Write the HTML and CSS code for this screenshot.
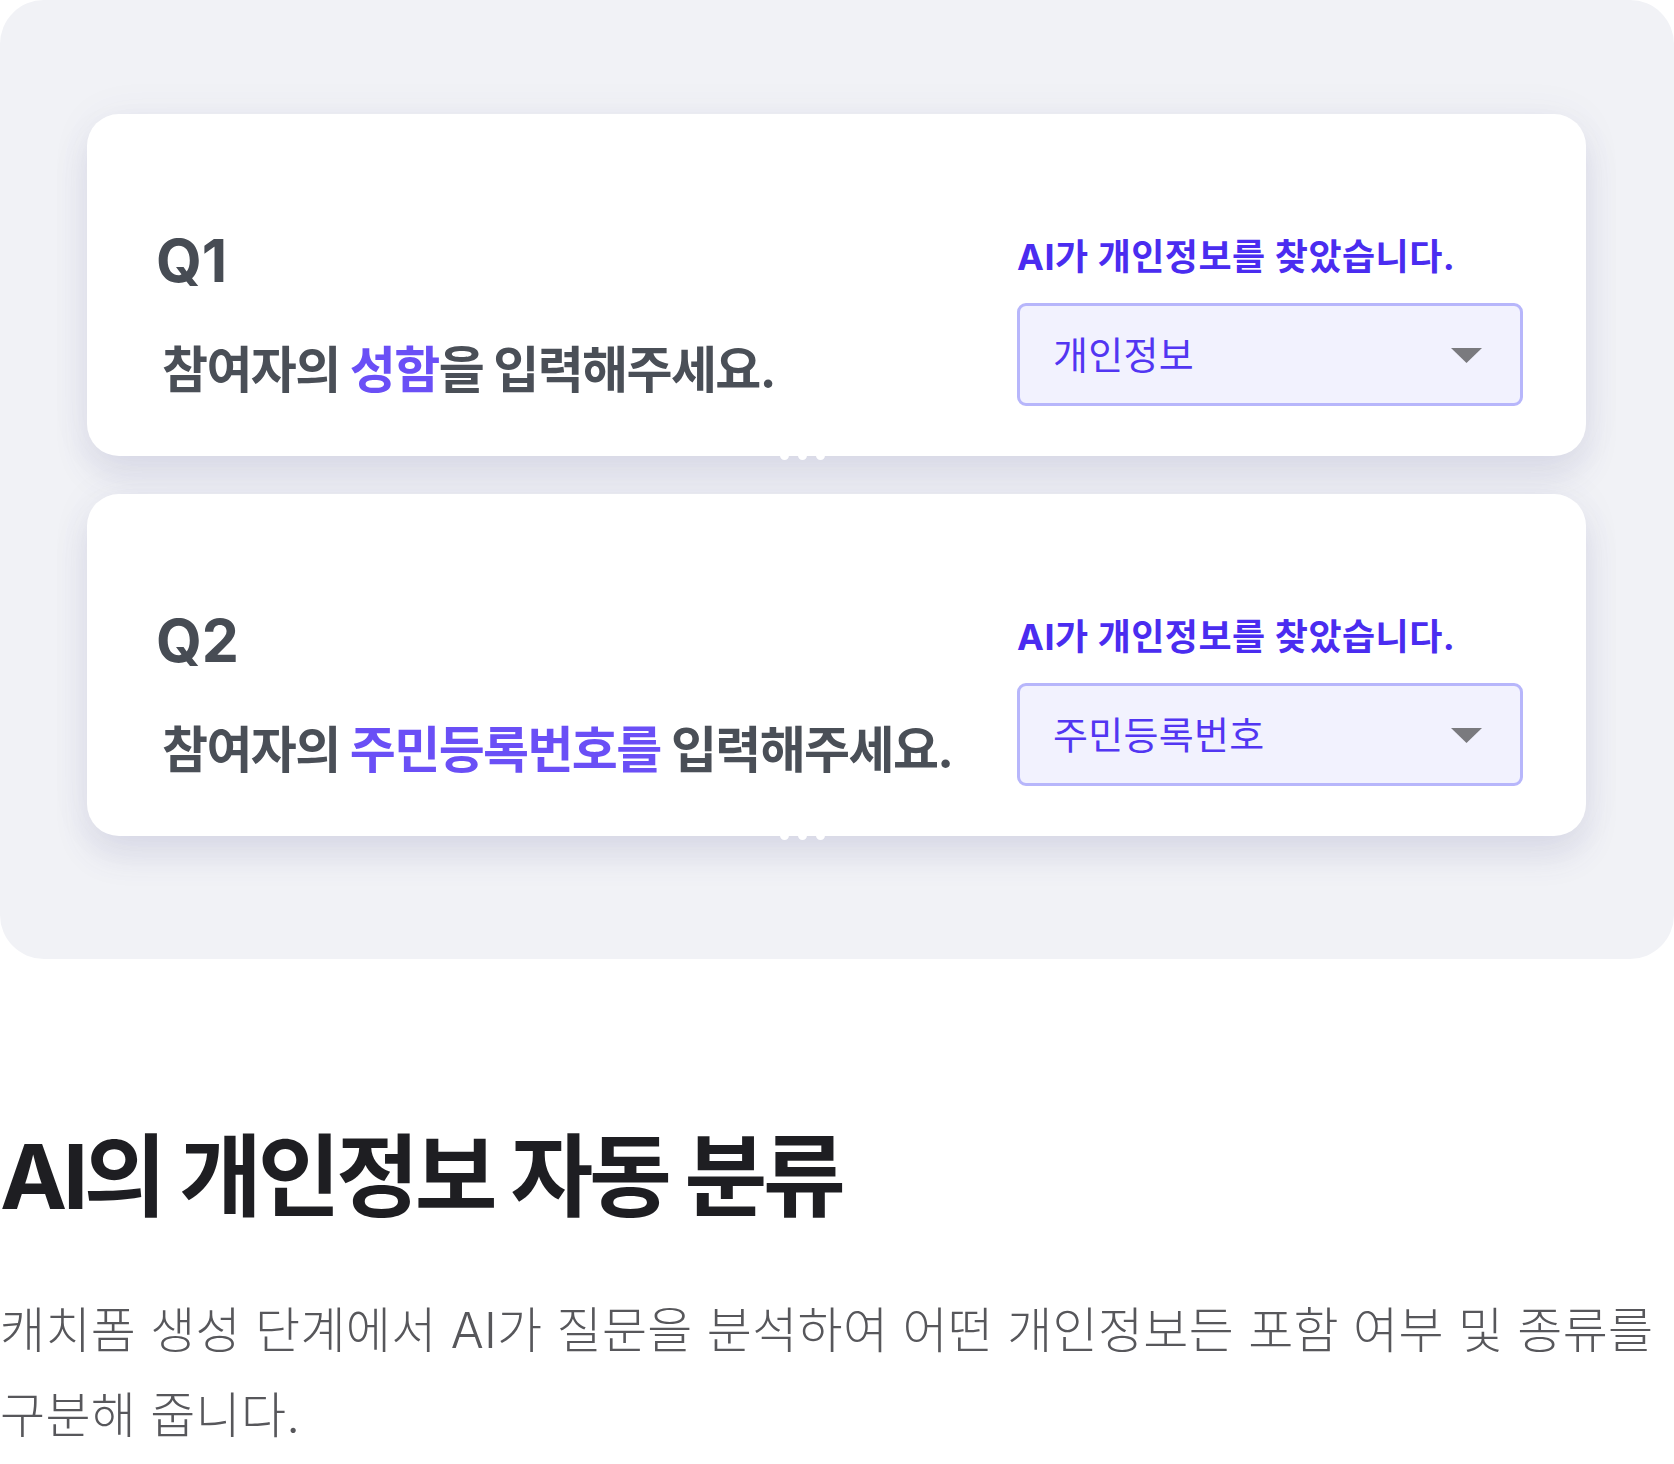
FILE: index.html
```html
<!DOCTYPE html>
<html lang="ko">
<head>
<meta charset="utf-8">
<title>AI의 개인정보 자동 분류</title>
<link rel="stylesheet" href="styles.css">
</head>
<body>
<div class="panel">
  <div class="card">
    <div class="question">
      <div class="qnum">Q1</div>
      <div class="qtext">참여자의 <span class="hl">성함</span>을 입력해주세요.</div>
    </div>
    <div class="ai">
      <div class="ai-label">AI가 개인정보를 찾았습니다.</div>
      <div class="select">
        <span class="select-value">개인정보</span>
        <svg class="caret" width="31" height="15" viewBox="0 0 31 15"><path d="M0 0H31L15.5 15Z" fill="#7a7a7e"/></svg>
      </div>
    </div>
    <div class="dots"><i></i><i></i><i></i></div>
  </div>
  <div class="card">
    <div class="question">
      <div class="qnum">Q2</div>
      <div class="qtext">참여자의 <span class="hl">주민등록번호를</span> 입력해주세요.</div>
    </div>
    <div class="ai">
      <div class="ai-label">AI가 개인정보를 찾았습니다.</div>
      <div class="select">
        <span class="select-value">주민등록번호</span>
        <svg class="caret" width="31" height="15" viewBox="0 0 31 15"><path d="M0 0H31L15.5 15Z" fill="#7a7a7e"/></svg>
      </div>
    </div>
    <div class="dots"><i></i><i></i><i></i></div>
  </div>
</div>
<section class="intro">
  <h1 class="title">AI의 개인정보 자동 분류</h1>
  <p class="desc">캐치폼 생성 단계에서 AI가 질문을 분석하여 어떤 개인정보든 포함 여부 및 종류를<br>구분해 줍니다.</p>
</section>
</body>
</html>
```

FILE: styles.css
```css
html, body {
  margin: 0;
  padding: 0;
  background: #ffffff;
}
body {
  font-family: Inter, "Noto Sans CJK KR", sans-serif;
  width: 1674px;
}
.panel {
  box-sizing: border-box;
  height: 959px;
  background: #f1f2f6;
  border-radius: 44px;
  padding: 114px 88px 0 87px;
  display: flex;
  flex-direction: column;
  gap: 38px;
}
.card {
  position: relative;
  box-sizing: border-box;
  height: 342px;
  background: #ffffff;
  border-radius: 32px;
  padding: 0 63px 50px 68px;
  display: flex;
  justify-content: space-between;
  align-items: flex-end;
  box-shadow: 0 20px 34px rgba(70, 70, 140, 0.12), 0 0 44px rgba(70, 70, 140, 0.05);
}
.question {
  display: flex;
  flex-direction: column;
  padding-bottom: 8px;
}
.qnum {
  font-family: Inter, sans-serif;
  font-size: 59px;
  font-weight: 700;
  line-height: 1;
  color: #474c54;
  letter-spacing: 0;
  margin-bottom: 52px;
  padding-left: 1px;
}
.qtext {
  font-size: 50px;
  font-weight: 700;
  line-height: 56px;
  letter-spacing: -1.6px;
  color: #4a4f57;
  padding-left: 7px;
}
.hl {
  color: #6a4ff6;
}
.ai {
  width: 506px;
  display: flex;
  flex-direction: column;
}
.ai-label {
  font-size: 36px;
  font-weight: 700;
  line-height: 40px;
  letter-spacing: 0.5px;
  color: #4a2cf0;
  margin-bottom: 26px;
}
.select {
  box-sizing: border-box;
  height: 103px;
  border: 3px solid #b7b6fb;
  border-radius: 9px;
  background: #f2f2fe;
  display: flex;
  align-items: center;
  justify-content: space-between;
  padding: 0 38px 0 33px;
}
.select-value {
  font-size: 38px;
  font-weight: 400;
  letter-spacing: 0.3px;
  color: #5236f2;
  line-height: 1;
}
.caret {
  display: block;
  margin-top: 2px;
}
.dots {
  position: absolute;
  left: 693px;
  bottom: -4px;
  display: flex;
  gap: 9px;
}
.dots i {
  display: block;
  width: 9px;
  height: 9px;
  border-radius: 50%;
  background: #ffffff;
}
.intro {
  padding: 0;
}
.title {
  margin: 168px 0 0;
  font-size: 90px;
  font-weight: 700;
  line-height: 100px;
  letter-spacing: -4.3px;
  color: #1e1e22;
}
.desc {
  margin: 61px 0 0;
  font-size: 49px;
  font-weight: 300;
  line-height: 85px;
  letter-spacing: 0.3px;
  color: #57575b;
}
```
